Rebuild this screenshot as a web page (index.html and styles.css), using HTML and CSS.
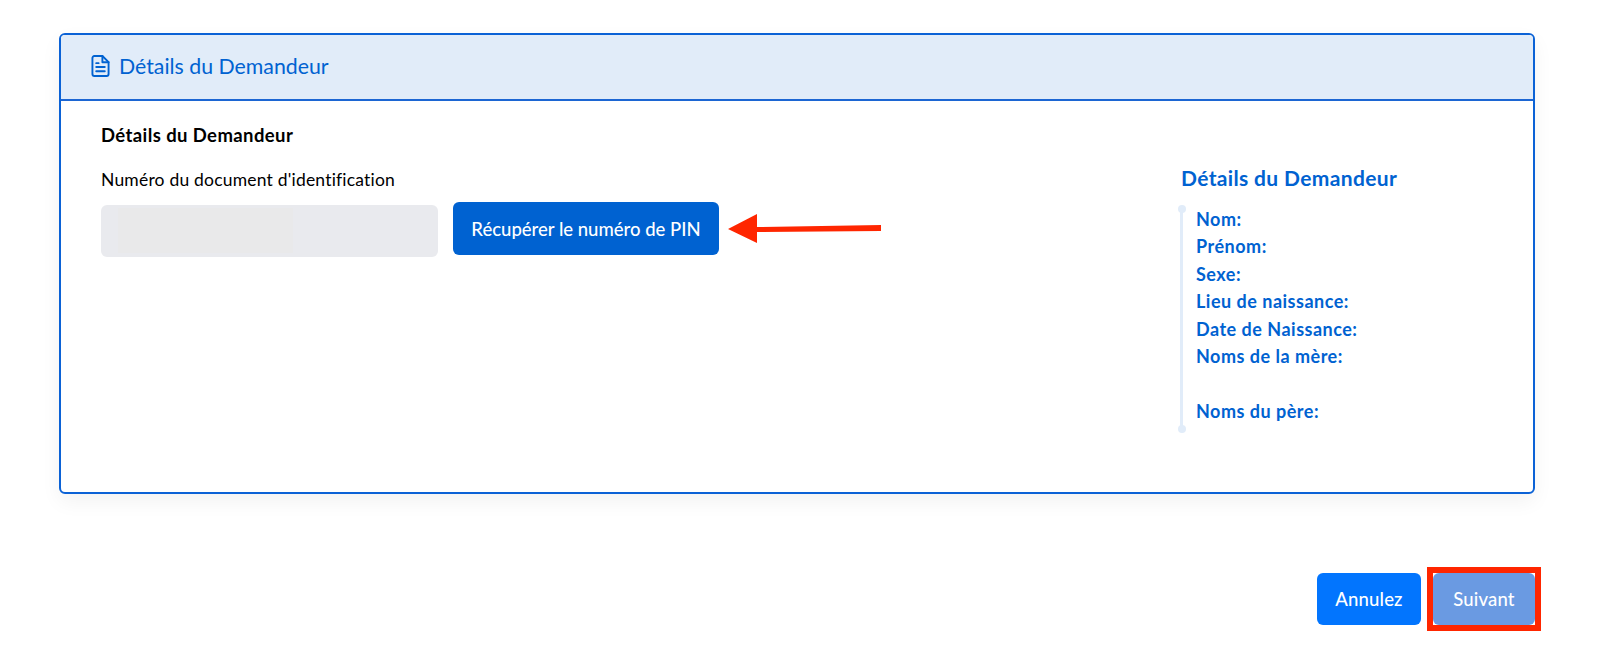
FILE: index.html
```html
<!DOCTYPE html>
<html lang="fr">
<head>
<meta charset="utf-8">
<title>Détails du Demandeur</title>
<link rel="stylesheet" href="styles.css">
</head>
<body>
<main class="page">
  <section class="card">
    <header class="card-head">
      <svg class="doc-icon" viewBox="0 0 20 24" fill="none" stroke="#0062d1" stroke-width="2" stroke-linejoin="round" stroke-linecap="round">
        <path d="M3.5 1.5h8.5l6.5 6.5v12.5a2 2 0 0 1-2 2h-13a2 2 0 0 1-2-2v-17a2 2 0 0 1 2-2z"/>
        <path d="M12 1.5v6.5h6.5"/>
        <path d="M5.5 9h2.5M5.5 13h9M5.5 17.5h9"/>
      </svg>
      <span class="card-title">Détails du Demandeur</span>
    </header>
    <div class="card-body">
      <div class="form-col">
        <h2 class="form-title">Détails du Demandeur</h2>
        <label class="field-label">Numéro du document d'identification</label>
        <div class="field-row">
          <div class="field-input"><div class="field-blur"></div></div>
          <button class="btn btn-pin">Récupérer le numéro de PIN</button>
          <svg class="arrow" viewBox="0 0 154 30"><path d="M0 15 29 0v13l124-2v6L29 18v11z" fill="#ff2600"/></svg>
        </div>
      </div>
      <aside class="summary">
        <h3 class="summary-title">Détails du Demandeur</h3>
        <ul class="timeline">
          <li>Nom:</li>
          <li>Prénom:</li>
          <li>Sexe:</li>
          <li>Lieu de naissance:</li>
          <li>Date de Naissance:</li>
          <li class="tall">Noms de la mère:</li>
          <li>Noms du père:</li>
        </ul>
      </aside>
    </div>
  </section>
  <footer class="actions">
    <button class="btn btn-cancel">Annulez</button>
    <div class="next-frame"><button class="btn btn-next">Suivant</button></div>
  </footer>
</main>
</body>
</html>
```
FILE: styles.css
```css
* { box-sizing: border-box; }
html, body { margin: 0; padding: 0; background: #fff; }
body { font-family: Lato, "Noto Sans", sans-serif; color: #000; overflow: hidden; height: 646px; }
.page { padding: 33px 65px 0 59px; }
.card {
  height: 461px;
  border: 2px solid #0b62d6;
  border-radius: 6px;
  box-shadow: 0 8px 20px rgba(0, 0, 0, .05);
  background: #fff;
  overflow: hidden;
}
.card-head {
  height: 66px;
  display: flex;
  align-items: center;
  gap: 9px;
  padding: 0 0 3px 30px;
  background: #e1ecf9;
  border-bottom: 2px solid #1c66d3;
}
.doc-icon { width: 19px; height: 24px; flex: none; }
.card-title { font-size: 21.3px; color: #0062d1; }
.card-body { display: flex; justify-content: space-between; padding: 23px 0 0 40px; }
.form-title { margin: 0 0 23px; font-size: 18.5px; letter-spacing: .4px; line-height: 22px; font-weight: 700; }
.field-label { display: block; font-size: 17.5px; letter-spacing: .2px; line-height: 22px; }
.field-row { position: relative; display: flex; align-items: flex-start; gap: 15px; margin-top: 11px; }
.field-input {
  width: 337px; height: 52px; margin-top: 3px;
  background: #e9eaee; border-radius: 6px; padding: 3px 145px 4px 17px;
}
.field-blur { height: 100%; background: #e9e9ea; }
.btn { border: 0; border-radius: 6px; color: #fff; font: 500 18.5px Lato, "Noto Sans", sans-serif; }
.btn-pin { width: 266px; height: 53px; background: #0062d1; }
.arrow { position: absolute; left: 627px; top: 12px; width: 154px; height: 30px; }
.summary { width: 352px; padding-top: 41px; }
.summary-title { margin: 0 0 11px; font-size: 21px; letter-spacing: .35px; line-height: 26px; font-weight: 700; color: #0062d1; }
.timeline {
  position: relative;
  list-style: none; margin: 0; padding: 3.5px 0 0 15px;
  height: 227px;
  color: #0062d1; font-size: 18px; letter-spacing: .5px; font-weight: 700; line-height: 27.5px;
}
.timeline::before {
  content: ""; position: absolute; left: -1px; top: 7px; bottom: 0;
  width: 3px; background: #e1ecf9;
}
.timeline::after {
  content: ""; position: absolute; left: -3px; top: 3px; width: 8px; height: 8px;
  border-radius: 50%; background: #e1ecf9; box-shadow: 0 220px 0 #e1ecf9;
}
.timeline .tall { margin-bottom: 27.5px; }
.actions { display: flex; justify-content: flex-end; gap: 6px; margin-top: 79px; }
.btn-cancel { width: 104px; height: 52px; background: #0275fe; letter-spacing: .15px; }
.next-frame { display: flex; border: 6px solid #ff2600; margin: -6px -6px -6px 0; }
.btn-next { width: 102px; height: 52px; background: #6a9ae2; letter-spacing: .15px; }
```
